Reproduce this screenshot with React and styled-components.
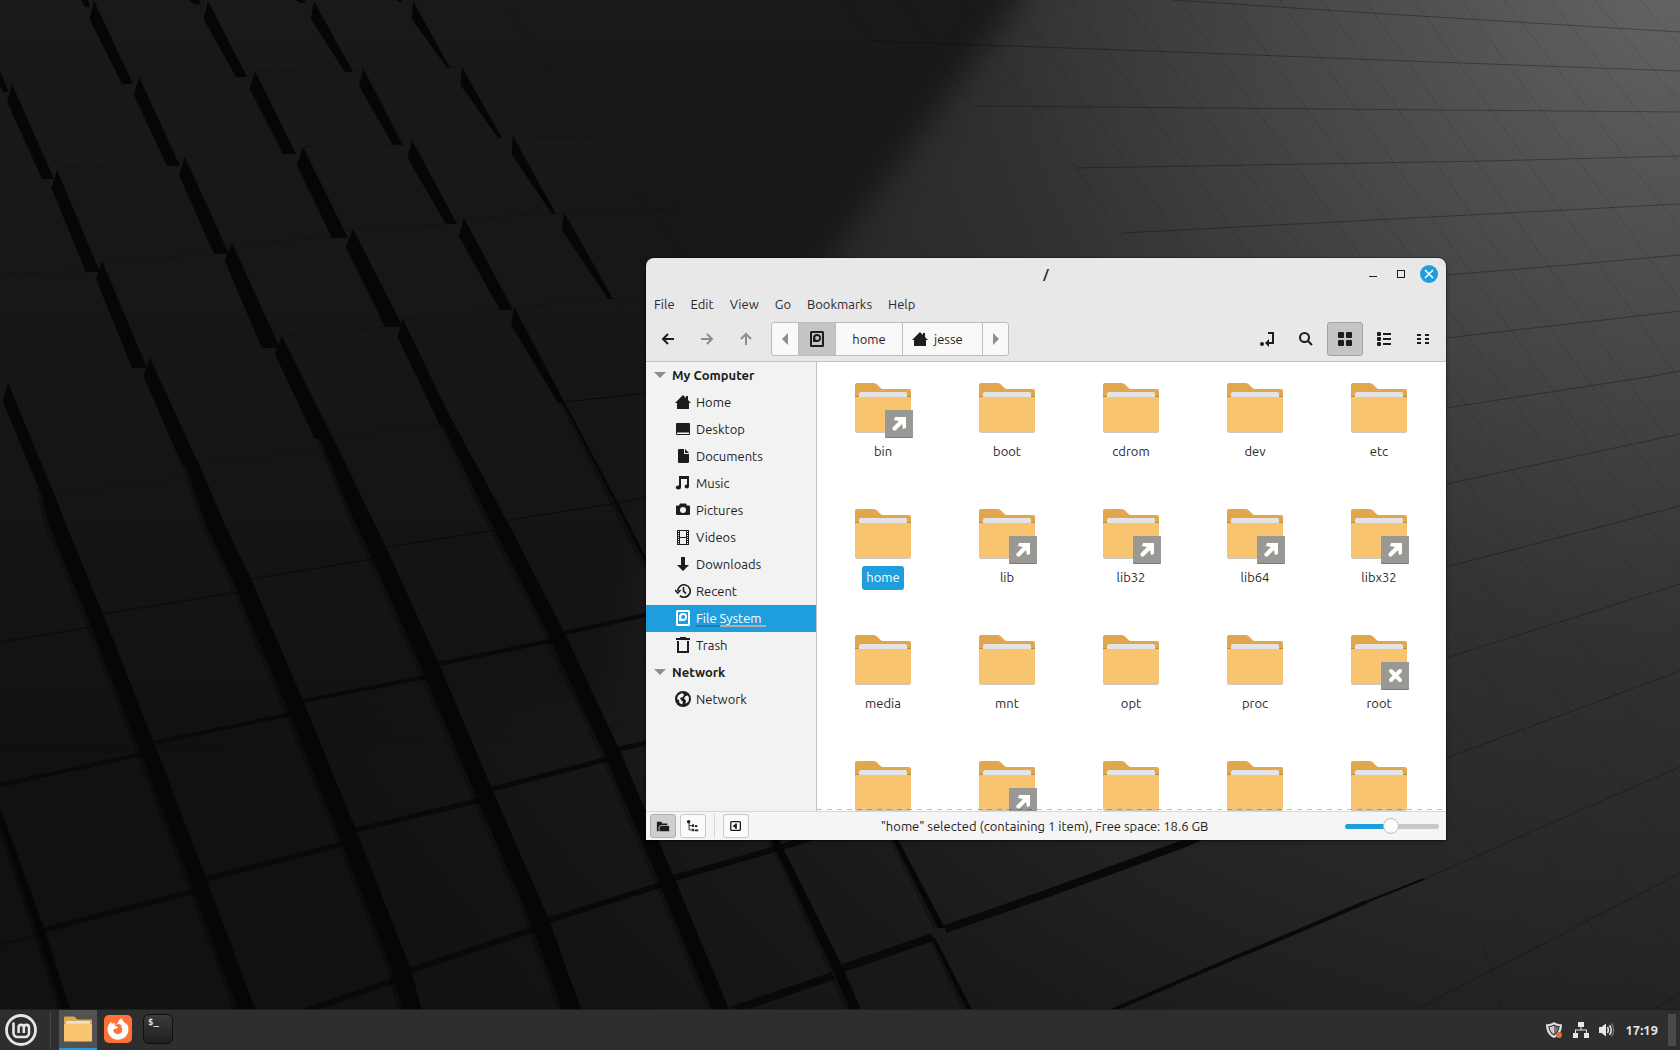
import { useState } from "react";
import styled, { createGlobalStyle } from "styled-components";
import { FaFirefoxBrowser } from "react-icons/fa6";

const FOLDERS = [
    { name: "bin", emblem: "link" },
    { name: "boot" },
    { name: "cdrom" },
    { name: "dev" },
    { name: "etc" },
    { name: "home" },
    { name: "lib", emblem: "link" },
    { name: "lib32", emblem: "link" },
    { name: "lib64", emblem: "link" },
    { name: "libx32", emblem: "link" },
    { name: "media" },
    { name: "mnt" },
    { name: "opt" },
    { name: "proc" },
    { name: "root", emblem: "locked" },
]

// last row, only the icons fit above the status bar
const PARTIAL_FOLDERS = [
    { name: "run" },
    { name: "sbin", emblem: "link" },
    { name: "srv" },
    { name: "sys" },
    { name: "tmp" },
]

const PLACES = ["Home", "Desktop", "Documents", "Music", "Pictures", "Videos", "Downloads", "Recent", "File System", "Trash"]

// shadows between the raised tiles: x, y of the tip, x, y of the foot, width
const GAPS = [
    [94, 1, 133, 84, 11], [208, 1, 247, 77, 11], [314, 1, 353, 72, 8], [413, 1, 450, 68, 3],
    [12, 84, 54, 179, 12], [139, 77, 180, 166, 13], [255, 71, 296, 154, 13], [363, 68, 403, 145, 10], [462, 67, 502, 138, 4],
    [57, 170, 100, 272, 14], [185, 157, 229, 254, 15], [303, 147, 348, 238, 16], [412, 140, 457, 224, 11], [513, 136, 556, 214, 4],
    [102, 261, 147, 368, 15], [232, 243, 280, 348, 18], [353, 229, 403, 327, 18], [464, 218, 513, 310, 13], [564, 212, 613, 299, 5],
    [8, 383, 54, 494, 13], [150, 358, 199, 465, 17], [282, 336, 333, 439, 18], [403, 319, 454, 425, 14], [514, 307, 565, 403, 7],
    [-32, 0, 9, 92, 6], [82, -20, 90, 7, 5], [190, -20, 201, 4, 7], [296, -20, 306, 3, 6], [395, -20, 402, 2, 3],
]

const BANDS = [
    { w: 8, pts: [[0, 808], [44, 928], [71, 1012]] },
    { w: 17, pts: [[52, 488], [66, 525], [103, 614], [154, 743], [206, 878], [256, 1012]] },
    { w: 19, pts: [[198, 462], [225, 525], [251, 579], [303, 701], [356, 830], [411, 970], [422, 1012]] },
    { w: 19, pts: [[332, 436], [375, 525], [386, 547], [438, 662], [492, 789], [549, 920], [582, 1012]] },
    { w: 17, pts: [[453, 422], [509, 525], [564, 632], [619, 749], [674, 877], [730, 1012]] },
    { w: 3, pts: [[565, 403], [618, 503], [650, 566]] },
    { w: 11, pts: [[779, 840], [843, 968], [862, 1012]] },
    { w: 7, pts: [[897, 838], [945, 928]] },
    { w: 5, pts: [[935, 938], [973, 1012]] },
]

const SEAMS = [
    { w: 1, d: "M0 642L98 626M103 614L244 591M251 579L378 558M386 547L504 529M509 520L618 503L648 497M565 402L646 393M0 945L42 933" },
    { w: 4, d: "M0 785L147 753M154 743L296 713M303 701L431 676M438 664L560 639M564 633L650 614" },
    { w: 5, d: "M44 930L199 890M206 879L351 842M356 830L485 799M492 789L612 758M619 749L650 742" },
    { w: 6, d: "M305 1011L405 977M411 970L541 927M549 920L667 883M674 878L779 848L830 832" },
    { w: 8, d: "M733 1010L833 976M843 968L933 937M945 929L1040 896L1109 871L1183 844L1210 832" },
    { w: 4, d: "M1113 1010L1236 957L1301 930L1366 902" },
    { w: 2, d: "M1366 902L1424 879" },
]

const TILE_TOPS = "M12 84L122 84L139 77L236 77L255 71L345 72L363 68L447 68L462 67L560 70"
    + "M57 167L167 166L185 157L283 154L303 147L394 145L412 140L500 138L513 136L620 138"
    + "M0 180L44 179M0 273L86 272L102 261L214 254L232 243L333 238L353 229L446 224L464 218L553 214L564 212L680 208"
    + "M8 383L132 372L150 358L263 348L282 336L385 327L403 319L500 310L514 307L608 299L640 297"
    + "M54 494L182 478L200 465L315 450L334 437L440 425L456 415L560 403"
    + "M510 10L591 134L648 207L690 265M613 299L648 358"

const RIGHT_ROWS = "M1172 0L1370 13L1680 32M872 41L1204 53L1408 61L1680 71M977 106L1445 110L1680 112"
    + "M1076 168L1487 161L1680 156M1123 233L1527 212L1680 204M1300 294L1446 275L1568 265L1680 255"
    + "M1446 338L1612 319L1680 311M1446 408L1654 376L1680 371M1446 484L1680 434M1446 567L1680 506"
    + "M1446 658L1680 584M1446 758L1680 671M1424 879L1477 856L1558 820L1680 767M1415 1010L1680 873M1652 1010L1680 993"

const RIGHT_COLUMNS = "M843 0L872 41M902 0L972 104M960 0L1076 168L1520 820L1648 1010M1013 0L1585 820L1680 958M1071 0L1647 820L1680 868"
    + "M1124 0L1680 783M1179 0L1680 708M1230 0L1680 637M1280 0L1680 572M1322 0L1680 513M1365 0L1680 457M1414 0L1680 380"
    + "M1461 0L1680 300M1504 0L1680 228M1550 0L1680 164M1595 0L1680 102M1640 0L1680 46"
    + "M1446 820L1477 856L1579 1010M1481 934L1502 1010M1040 928L1086 1010M1005 840L1038 895"

const gapPath = ([x, y, fx, fy, w]) => `M${x} ${y}L${fx} ${fy}L${fx - w} ${fy}L${x - w * 0.4} ${y + 18}Z`

// a band starts narrower than it goes on
const bandPath = ({ w, pts }) => {
    const left = pts.map(([x, y], i) => [x - (i === 0 ? w * 0.7 : w), y]).reverse()
    return "M" + [...pts, ...left].map(p => p.join(" ")).join("L") + "Z"
}

function Wallpaper() {
    return (
        <WallpaperArt viewBox="0 0 1680 1050" preserveAspectRatio="xMidYMid slice" aria-hidden="true">
            <defs>
                <radialGradient id="light" gradientUnits="userSpaceOnUse" cx="1700" cy="-60" r="1700">
                    <stop offset="0" stopColor="#686868" />
                    <stop offset="0.15" stopColor="#535353" />
                    <stop offset="0.3" stopColor="#404040" />
                    <stop offset="0.42" stopColor="#313131" />
                    <stop offset="0.6" stopColor="#252525" />
                    <stop offset="0.75" stopColor="#191919" />
                    <stop offset="0.9" stopColor="#131313" />
                    <stop offset="1" stopColor="#111111" />
                </radialGradient>
                <linearGradient id="shade" gradientUnits="userSpaceOnUse" x1="0" y1="0" x2="0" y2="700">
                    <stop offset="0" stopColor="#191919" />
                    <stop offset="0.4" stopColor="#171717" />
                    <stop offset="1" stopColor="#131313" />
                </linearGradient>
                <filter id="soft" colorInterpolationFilters="sRGB"><feGaussianBlur stdDeviation="16" /></filter>
            </defs>
            <rect width="1680" height="1050" fill="url(#light)" />
            <path d="M-90 -90H1075L1005 20L820 270L660 500L600 700L-90 720Z" fill="url(#shade)" filter="url(#soft)" />
            <path d={RIGHT_ROWS} fill="none" stroke="#000" strokeOpacity="0.3" />
            <path d={RIGHT_COLUMNS} fill="none" stroke="#000" strokeOpacity="0.12" />
            <path d={TILE_TOPS} fill="none" stroke="#000" strokeOpacity="0.16" />
            {SEAMS.map(seam => <path key={seam.d} d={seam.d} fill="none" stroke="#090909" strokeWidth={seam.w} />)}
            {BANDS.map((band, i) => <path key={i} d={bandPath({ ...band, w: band.w + 5 })} fill="#000" fillOpacity="0.25" />)}
            {BANDS.map((band, i) => <path key={i} d={bandPath(band)} fill="#060606" />)}
            {GAPS.map((gap, i) => <path key={i} d={gapPath(gap)} fill="#060606" />)}
        </WallpaperArt>
    )
}

function Icon({ children, size = 16 }) {
    return <svg width={size} height={size} viewBox="0 0 16 16" fill="currentColor" aria-hidden="true">{children}</svg>
}

const disk = <>
    <path fillRule="evenodd" d="M2.500 0h11A1.500 1.500 0 0 1 15 1.500v13a1.500 1.500 0 0 1-1.500 1.500h-11A1.500 1.500 0 0 1 1 14.500v-13A1.500 1.500 0 0 1 2.500 0zM3 2v12h10V2z" />
    <path fillRule="evenodd" d="M8 3a4 4 0 1 1 0 8H4V7a4 4 0 0 1 4-4zm.2 2A2 2 0 1 0 8.200 9 2 2 0 0 0 8.200 5z" />
</>

const home = <path d="M8 1L0 9h2v6h12V9h2l-3-3V2h-2v2z" />

const ICONS = {
    "Home": home,
    "Desktop": <path fillRule="evenodd" d="M2 2h12a1 1 0 0 1 1 1v10a1 1 0 0 1-1 1H2a1 1 0 0 1-1-1V3a1 1 0 0 1 1-1zm0 9.500V13h12v-1.500z" />,
    "Documents": <path d="M4 1h5v5h5v8a1 1 0 0 1-1 1H4a1 1 0 0 1-1-1V2a1 1 0 0 1 1-1zm6 0l4 4h-4z" />,
    "Music": <path d="M4 1h10v10.500a2.200 2 0 1 1-2-2V4H6v8.500a2.600 2 0 1 1-2-2z" />,
    "Pictures": <path fillRule="evenodd" d="M5 1.500h6l1 2h2a1 1 0 0 1 1 1V12a1 1 0 0 1-1 1H2a1 1 0 0 1-1-1V4.500a1 1 0 0 1 1-1h2zM8 5a3 3 0 1 0 0 6 3 3 0 0 0 0-6z" />,
    "Videos": <>
        <path fillRule="evenodd" d="M2 1h12v15H2zM5 2v6h6V2zM5 9v6h6V9z" />
        <path d="M3.500 2v14M12.500 2v14" stroke="#f2f2f2" strokeDasharray="1 1" />
    </>,
    "Downloads": <path d="M6 1h4v8h4l-6 6-6-6h4z" />,
    "Recent": <g fill="none" stroke="currentColor" strokeWidth="1.600">
        <path d="M2.800 8a6.200 6.200 0 1 1 2 4.600M0 7l2.800 3L5.600 7M8.500 4v4.200l2.500 2.400" />
    </g>,
    "File System": disk,
    "Trash": <path fillRule="evenodd" d="M5 0h6v1h4v2H1V1h4zM2 4h12v12H2zm2 0v10h8V4z" />,
    "Network": <>
        <path fillRule="evenodd" d="M8 0a8 8 0 1 1 0 16A8 8 0 0 1 8 0zm-1 2L3 4.500 2 8l2 1 .500 3L7 13.500 8 11 6 9l-1-2 3-1 1-2.500zm3.500 3L9 7.500l2 2-.500 3.500 3-2.500.500-3.500-1-2.500z" />
    </>,
}

const ArrowLeft = () => <Icon><path d="M8 3L3 8l5 5M3 8h11" fill="none" stroke="currentColor" strokeWidth="2" /></Icon>
const ArrowRight = () => <Icon><path d="M8 3l5 5-5 5M13 8H2" fill="none" stroke="currentColor" strokeWidth="2" /></Icon>
const ArrowUp = () => <Icon><path d="M3 8l5-5 5 5M8 3v11" fill="none" stroke="currentColor" strokeWidth="2" /></Icon>

function Folder({ emblem, size = 64 }) {
    return (
        <svg width={size} height={size} viewBox="0 0 64 64" aria-hidden="true">
            <rect x="4" y="22" width="56" height="35" rx="2" fill="#cbc9c7" />
            <path d="M6 7h17c1 0 2 .5 3 1.500l3 3c1 1 2 1.500 3 1.500h26a2 2 0 0 1 2 2v10H4V9a2 2 0 0 1 2-2z" fill="#e0a74e" />
            <path d="M4 20h56v3H4z" fill="#b98b43" />
            <rect x="8" y="16" width="48" height="10" rx="2" fill="#e4e4e4" />
            <path d="M5 21h54a1 1 0 0 1 1 1v32a2 2 0 0 1-2 2H6a2 2 0 0 1-2-2V22a1 1 0 0 1 1-1z" fill="#f8c470" />
            {emblem && <>
                <rect x="34" y="34" width="28" height="28" rx="1" fill="#7b7a77" />
                <rect x="34" y="34" width="28" height="27" rx="1" fill="#999894" />
            </>}
            {emblem === "link" && <path d="M44 41h11v11l-3 1-1-5-6 6a2 2 0 0 1-3-3l6-6-5-1z" fill="#fff" />}
            {emblem === "locked" && <path d="M44 43l9 9M53 43l-9 9" stroke="#fff" strokeWidth="4" strokeLinecap="round" />}
        </svg>
    )
}

function MintLogo() {
    return (
        <svg width="32" height="32" viewBox="0 0 32 32" fill="none" stroke="#e6e6e6" aria-hidden="true">
            <circle cx="16" cy="16" r="14.500" strokeWidth="2.800" />
            <path d="M8.500 8.500v10.500a4 4 0 0 0 4 4h7.500a4 4 0 0 0 4-4v-5.500a2.600 2.600 0 0 0-5.200 0V19M18.800 13.500a2.600 2.600 0 0 0-5.200 0V19" strokeWidth="2.600" />
        </svg>
    )
}

export default function App() {
    const [selected, setSelected] = useState("home")
    const [place, setPlace] = useState("File System")
    const [view, setView] = useState("icons")
    const [zoom, setZoom] = useState(49)

    const placeRow = name => (
        <Place key={name} href="#" $active={place === name} onClick={e => { e.preventDefault(); setPlace(name) }}>
            <Icon>{ICONS[name]}</Icon>
            <PlaceName>
                {name}
                {name === "File System" && <Usage />}
            </PlaceName>
        </Place>
    )

    return (
        <Desktop>
            <GlobalStyle />
            <Space>
                <Wallpaper />
                <Window>
                    <TitleBar>
                        <h1>/</h1>
                        <WindowControls>
                            <Control aria-label="Minimize"><Icon><path d="M4 10h8v1H4z" /></Icon></Control>
                            <Control aria-label="Maximize">
                                <Icon><path fillRule="evenodd" d="M4 4h8v8H4zm1 1v6h6V5z" /></Icon>
                            </Control>
                            <Control $close aria-label="Close">
                                <Icon><path d="M4 4l8 8M12 4l-8 8" stroke="currentColor" strokeWidth="1.500" /></Icon>
                            </Control>
                        </WindowControls>
                    </TitleBar>
                    <MenuBar>
                        {["File", "Edit", "View", "Go", "Bookmarks", "Help"].map(item => <button key={item}>{item}</button>)}
                    </MenuBar>
                    <Toolbar>
                        <Tool aria-label="Back"><ArrowLeft /></Tool>
                        <Tool aria-label="Forward" disabled><ArrowRight /></Tool>
                        <Tool aria-label="Up" disabled><ArrowUp /></Tool>
                        <PathBar>
                            <Crumb $width={26} $muted aria-label="Scroll left"><Icon><path d="M11 2v12L5 8z" /></Icon></Crumb>
                            <Crumb $width={37} $active aria-label="File System"><Icon>{disk}</Icon></Crumb>
                            <Crumb $width={67}>home</Crumb>
                            <Crumb $width={80} $start><Icon>{home}</Icon>jesse</Crumb>
                            <Crumb $width={26} $muted aria-label="Scroll right"><Icon><path d="M5 2v12l6-6z" /></Icon></Crumb>
                        </PathBar>
                        <Tool aria-label="Toggle location entry">
                            <Icon>
                                <circle cx="3" cy="13" r="2" />
                                <path d="M9 2h5v10H9" fill="none" stroke="currentColor" strokeWidth="2" />
                                <path d="M6 12l4-4v8z" />
                            </Icon>
                        </Tool>
                        <Tool aria-label="Search">
                            <Icon><path d="M11 6.500a4.500 4.500 0 1 1-9 0 4.500 4.500 0 0 1 9 0zM9.500 9.500L14 14" fill="none" stroke="currentColor" strokeWidth="2" /></Icon>
                        </Tool>
                        <Tool aria-label="Icon view" $active={view === "icons"} onClick={() => setView("icons")}>
                            <Icon>
                                <rect x="1" y="1" width="6" height="6" rx="1" />
                                <rect x="9" y="1" width="6" height="6" rx="1" />
                                <rect x="1" y="9" width="6" height="6" rx="1" />
                                <rect x="9" y="9" width="6" height="6" rx="1" />
                            </Icon>
                        </Tool>
                        <Tool aria-label="List view" $active={view === "list"} onClick={() => setView("list")}>
                            <Icon>
                                {[1, 6, 11].map(y => <rect key={y} x="1" y={y} width="4" height="4" rx="1" />)}
                                <path d="M7 2h8v2H7zM7 7h8v2H7zM7 12h8v2H7z" />
                            </Icon>
                        </Tool>
                        <Tool aria-label="Compact view" $active={view === "compact"} onClick={() => setView("compact")}>
                            <Icon><path d="M2 3h4v2H2zM2 7h4v2H2zM2 11h4v2H2zM10 3h4v2h-4zM10 7h4v2h-4zM10 11h4v2h-4z" /></Icon>
                        </Tool>
                    </Toolbar>
                    <Body>
                        <Sidebar>
                            <Group><Icon><path d="M2 5h12l-6 6z" /></Icon>My Computer</Group>
                            {PLACES.map(placeRow)}
                            <Group><Icon><path d="M2 5h12l-6 6z" /></Icon>Network</Group>
                            {placeRow("Network")}
                        </Sidebar>
                        <Files>
                            {FOLDERS.map(folder => (
                                <File key={folder.name} $active={selected === folder.name} onClick={() => setSelected(folder.name)}>
                                    <Folder emblem={folder.emblem} />
                                    <span>{folder.name}</span>
                                </File>
                            ))}
                            {PARTIAL_FOLDERS.map(folder => (
                                <File key={folder.name} aria-label={folder.name}>
                                    <Folder emblem={folder.emblem} />
                                </File>
                            ))}
                            <Undershoot />
                        </Files>
                    </Body>
                    <StatusBar>
                        <StatusButtons>
                            <Toggle $active aria-label="Show places">
                                <Icon size={14}><path d="M1 3h5l1 2h6v2H5L3 9v5H2a1 1 0 0 1-1-1zM6 8h9v6H4V9z" /></Icon>
                            </Toggle>
                            <Toggle aria-label="Show treeview">
                                <Icon size={14}>
                                    <circle cx="3" cy="3" r="2" />
                                    <path d="M3.500 3v9.500H9M3.500 7.500H8" fill="none" stroke="currentColor" />
                                    <path d="M7 6h2v3H7zM10 7h3v2h-3zM7 11h2v3H7zM10 12h4v2h-4z" />
                                </Icon>
                            </Toggle>
                            <Divider />
                            <Toggle aria-label="Hide sidebar">
                                <Icon size={14}>
                                    <rect x="2" y="3" width="11" height="10" rx="1" fill="none" stroke="currentColor" strokeWidth="1.500" />
                                    <path d="M7 5h2v6H7v-1L4 8l3-2z" />
                                </Icon>
                            </Toggle>
                        </StatusButtons>
                        <p>"home" selected (containing 1 item), Free space: 18.6 GB</p>
                        <Zoom type="range" aria-label="Zoom" value={zoom} onChange={e => setZoom(Number(e.target.value))}
                            style={{ "--fill": `${zoom}%` }} />
                    </StatusBar>
                </Window>
            </Space>
            <Panel>
                <MenuButton aria-label="Menu"><MintLogo /></MenuButton>
                <PanelDivider />
                <Task $active aria-label="Files"><Folder size={32} /></Task>
                <Task aria-label="Firefox"><FirefoxTile><FaFirefoxBrowser size={22} /></FirefoxTile></Task>
                <Task aria-label="Terminal"><TerminalTile>$_</TerminalTile></Task>
                <Tray>
                    <button aria-label="Updates">
                        <svg width="18" height="18" viewBox="0 0 18 18">
                            <path d="M9 1c2 1.500 5 2.300 8 2.300C17 10 14.500 14.500 9 17 3.500 14.500 1 10 1 3.300 4 3.300 7 2.500 9 1z" fill="#dedede" />
                            <path d="M9 3.500c1.800 1 3.800 1.500 5.700 1.600C14.300 9.500 12.500 12.800 9 14.600 5.500 12.800 3.700 9.500 3.300 5.100 5.200 5 7.200 4.500 9 3.500z" fill="#333" />
                            <path d="M9 4.800c1.400.8 3 1.200 4.400 1.300C13 9.600 11.500 12 9 13.300z" fill="#777" />
                            <path d="M9 4.800C7.600 5.600 6 6 4.600 6.100 5 9.600 6.500 12 9 13.300z" fill="#cfcfcf" />
                            <circle cx="14" cy="14" r="3" fill="#e0703a" />
                        </svg>
                    </button>
                    <button aria-label="Network">
                        <Icon><path d="M5 0h6v5H8.500v2.500H14V11h2v5h-5v-5h2V8.500H3V11h2v5H0v-5h2V7.500h5.500V5H5z" /></Icon>
                    </button>
                    <button aria-label="Sound">
                        <Icon>
                            <path d="M0 5h2.500L7 1.500v13L2.500 11H0z" />
                            <g fill="none" stroke="currentColor" strokeWidth="1.500">
                                <path d="M8.500 5c1 1.700 1 4.300 0 6M10.500 3.200c2 2.800 2 6.800 0 9.600" />
                                <path d="M12.500 1.500c2.800 3.800 2.800 9.200 0 13" opacity="0.350" />
                            </g>
                        </Icon>
                    </button>
                    <time>17:19</time>
                    <ShowDesktop aria-label="Show desktop" />
                </Tray>
            </Panel>
        </Desktop>
    )
}

const GlobalStyle = createGlobalStyle`
    *{
        box-sizing: border-box;
    }

    body{
        margin: 0;
        background: #141414;
        font-family: Ubuntu, 'Noto Sans', sans-serif;
        font-size: 13px;
        line-height: 18px;
        color: #2a2a2a;
    }

    button{
        margin: 0;
        padding: 0;
        border: none;
        background: none;
        font: inherit;
        color: inherit;
    }

    svg{
        display: block;
        flex-shrink: 0;
    }
`

const Desktop = styled.div`
    height: 100vh;
    display: flex;
    flex-direction: column;
    overflow: hidden;
`

const Space = styled.main`
    position: relative;
    flex: 1;
    min-height: 0;
`

const WallpaperArt = styled.svg`
    position: absolute;
    top: 0;
    left: 0;
    width: 100vw;
    height: 100vh;
`

const Window = styled.section`
    position: absolute;
    left: 646px;
    top: 258px;
    width: 800px;
    height: 582px;
    display: flex;
    flex-direction: column;
    overflow: hidden;
    border-radius: 8px 8px 0 0;
    background: #e8e8e8;
    box-shadow: 0 0 0 1px rgba(0, 0, 0, 0.3), 0 2px 5px rgba(0, 0, 0, 0.3);
`

const TitleBar = styled.header`
    height: 32px;
    display: grid;
    grid-template-columns: 1fr auto 1fr;
    align-items: center;
    padding: 0 8px;

    h1{
        grid-column: 2;
        margin: 0;
        font-size: 13px;
        font-weight: 700;
    }
`

const WindowControls = styled.div`
    justify-self: end;
    display: flex;
    gap: 10px;
`

const Control = styled.button`
    width: 18px;
    height: 18px;
    display: grid;
    place-items: center;
    border-radius: 50%;
    background: ${props => props.$close ? "#1f9ede" : "none"};
    color: ${props => props.$close ? "#fff" : "#1d1d1d"};
`

const MenuBar = styled.nav`
    height: 28px;
    display: flex;
    align-items: center;
    gap: 16px;
    padding: 0 8px;
`

const Toolbar = styled.div`
    height: 44px;
    display: flex;
    align-items: center;
    gap: 3px;
    padding: 0 5px 1px 4px;
    border-bottom: 1px solid #c3c3c3;
`

const Tool = styled.button`
    width: 36px;
    height: 34px;
    display: grid;
    place-items: center;
    border: 1px solid ${props => props.$active ? "#a3a3a3" : "transparent"};
    border-radius: 3px;
    background: ${props => props.$active ? "#c5c5c5" : "none"};
    color: #1d1d1d;

    &:disabled{
        color: #8e8e8e;
    }
`

const PathBar = styled.div`
    height: 34px;
    display: flex;
    margin: 0 auto 0 4px;
    border: 1px solid #bdbdbd;
    border-radius: 3px;
    background: #f9f9f9;
    overflow: hidden;
`

const Crumb = styled.button`
    width: ${props => props.$width}px;
    display: flex;
    align-items: center;
    justify-content: ${props => props.$start ? "flex-start" : "center"};
    gap: 6px;
    padding-left: ${props => props.$start ? 9 : 0}px;
    background: ${props => props.$active ? "#c5c5c5" : "none"};
    color: ${props => props.$muted ? "#8e8e8e" : "#1d1d1d"};

    & + &{
        border-left: 1px solid #bdbdbd;
    }
`

const Body = styled.div`
    flex: 1;
    min-height: 0;
    display: flex;
`

const Sidebar = styled.nav`
    width: 171px;
    border-right: 1px solid #c3c3c3;
    background: #f2f2f2;
`

const Group = styled.div`
    height: 27px;
    display: flex;
    align-items: center;
    gap: 4px;
    padding: 0 0 1px 6px;
    font-weight: 700;
    color: #1d1d1d;

    svg{
        color: #8e8e8e;
    }
`

const Place = styled.a`
    height: 27px;
    display: flex;
    align-items: center;
    gap: 5px;
    padding: 0 0 1px 29px;
    background: ${props => props.$active ? "#1f9ede" : "none"};
    color: ${props => props.$active ? "#fff" : "#1d1d1d"};
    text-decoration: none;
`

const PlaceName = styled.span`
    position: relative;
`

const Usage = styled.i`
    position: absolute;
    left: 0;
    bottom: 0;
    width: 70px;
    height: 2px;
    background: linear-gradient(to right, #1a7eb4 35%, #b5adaa 35%);
`

const Files = styled.div`
    position: relative;
    flex: 1;
    display: grid;
    grid-template-columns: repeat(auto-fill, 124px);
    grid-auto-rows: 126px;
    padding-left: 4px;
    background: #fff;
    overflow: hidden;
`

const File = styled.button`
    display: flex;
    flex-direction: column;
    align-items: center;
    padding-top: 14px;

    span{
        padding: 2px 4px 4px;
        border-radius: 3px;
        background: ${props => props.$active ? "#1f9ede" : "none"};
        color: ${props => props.$active ? "#fff" : "#2a2a2a"};
    }
`

const Undershoot = styled.div`
    position: absolute;
    left: 0;
    right: 0;
    bottom: 1px;
    height: 1px;
    background: repeating-linear-gradient(to right, rgba(0, 0, 0, 0.25) 0 5px, transparent 5px 10px);
`

const StatusBar = styled.footer`
    height: 29px;
    display: grid;
    grid-template-columns: 1fr auto 1fr;
    align-items: center;
    padding: 0 7px 0 4px;
    border-top: 1px solid #d6d6d6;
    background: #f5f5f5;

    p{
        margin: 0;
        color: #1d1d1d;
    }
`

const StatusButtons = styled.div`
    display: flex;
    gap: 4px;
`

const Toggle = styled.button`
    width: 26px;
    height: 24px;
    display: grid;
    place-items: center;
    border: 1px solid ${props => props.$active ? "#b0b0b0" : "#c9c9c9"};
    border-radius: 3px;
    background: ${props => props.$active ? "#cfcfcf" : "#fbfbfb"};
    color: #1d1d1d;
`

const Divider = styled.span`
    width: 1px;
    margin: 0 4px;
    background: #d9d9d9;
`

const Zoom = styled.input`
    justify-self: end;
    appearance: none;
    width: 94px;
    height: 16px;
    margin: 0;
    background: none;

    &::-webkit-slider-runnable-track{
        height: 5px;
        border-radius: 3px;
        background: linear-gradient(to right, #1f9ede var(--fill), #c8c8c8 var(--fill));
    }

    &::-webkit-slider-thumb{
        appearance: none;
        width: 16px;
        height: 16px;
        margin-top: -6px;
        border: 1px solid #bdbdbd;
        border-radius: 50%;
        background: #fbfbfb;
    }
`

const Panel = styled.footer`
    position: relative;
    height: 41px;
    display: flex;
    border-top: 1px solid #1f1f1f;
    background: #2e2e2e;
    color: #e6e6e6;
`

const MenuButton = styled.button`
    padding: 0 5px;
`

const PanelDivider = styled.span`
    width: 1px;
    margin: 1px 8px;
    background: #484848;
`

const Task = styled.button`
    width: 38px;
    display: grid;
    place-items: center;
    margin-right: 2px;
    border-bottom: 2px solid ${props => props.$active ? "#1f9ede" : "transparent"};
    background: ${props => props.$active ? "#525252" : "none"};
`

const FirefoxTile = styled.span`
    width: 28px;
    height: 28px;
    display: grid;
    place-items: center;
    border-radius: 5px;
    background: #ff7139;
    color: #fff;
`

const TerminalTile = styled.span`
    width: 30px;
    height: 30px;
    padding: 2px 4px;
    border: 1px solid #0e0e0e;
    border-radius: 6px;
    background: linear-gradient(#3b3b3b, #1f1f1f);
    font-family: 'DejaVu Sans Mono', monospace;
    font-size: 9px;
    font-weight: 700;
    line-height: 10px;
    text-align: left;
    color: #e6e6e6;
`

const Tray = styled.div`
    display: flex;
    align-items: center;
    gap: 10px;
    margin-left: auto;
    padding-right: 4px;

    time{
        font-weight: 700;
    }
`

const ShowDesktop = styled.button`
    && {
        width: 8px;
        height: 32px;
        background: #4a4a4a;
    }
`
